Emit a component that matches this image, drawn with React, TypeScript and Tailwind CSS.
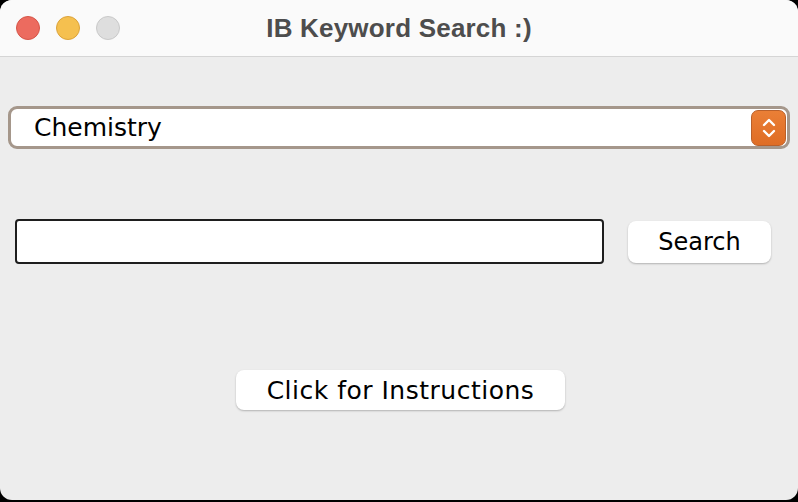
import React from "react";

export default function App() {
  return (
    <div className="w-[798px] h-[502px] bg-black">
      <div className="w-[798px] h-[500px] rounded-[12px] overflow-hidden flex flex-col bg-[#ededed]">
        <div className="relative h-[57px] shrink-0 bg-[#fafafa] border-b border-[#d5d5d5] flex items-center justify-center">
          <div className="absolute left-[16px] top-[16px] flex gap-[16px]">
            <div className="w-[24px] h-[24px] rounded-full bg-[#ec6b5f] border border-[#d65548]" />
            <div className="w-[24px] h-[24px] rounded-full bg-[#f5c04f] border border-[#dca33a]" />
            <div className="w-[24px] h-[24px] rounded-full bg-[#dedede] border border-[#c9c9c9]" />
          </div>
          <div className="text-[26px] font-bold text-[#4d4d4d] tracking-[0.2px] leading-none" style={{ fontFamily: '"Liberation Sans", Arial, sans-serif' }}>
            IB Keyword Search :)
          </div>
        </div>
        <div className="flex flex-col" style={{ fontFamily: '"DejaVu Sans", sans-serif' }}>
          <div className="mt-[49px] mx-[8px] h-[43px] rounded-[9px] border-[3px] border-[#a5978b] bg-white flex items-center justify-between pl-[23px] pr-[1px]">
            <span className="text-[25px] text-black leading-none">Chemistry</span>
            <div className="w-[35px] h-[36px] rounded-[7px] bg-gradient-to-b from-[#ea7f36] to-[#df6d25] border border-[#b9602a] flex items-center justify-center">
              <svg width="16" height="24" viewBox="0 0 16 24" fill="none" stroke="white" strokeWidth="2.4" strokeLinecap="round" strokeLinejoin="round">
                <path d="M3 9 L8 4 L13 9" />
                <path d="M3 15 L8 20 L13 15" />
              </svg>
            </div>
          </div>
          <div className="mt-[70px] pl-[15px] flex items-center gap-[24px]">
            <div className="w-[589px] h-[45px] bg-white border-2 border-[#1e1e1e] rounded-[4px]" />
            <div className="w-[143px] h-[42px] bg-white rounded-[8px] shadow-[0_1px_2px_rgba(0,0,0,0.25)] flex items-center justify-center text-[24px] text-black leading-none">
              Search
            </div>
          </div>
          <div className="mt-[106px] flex justify-center">
            <div className="ml-[3px] w-[329px] h-[40px] bg-white rounded-[8px] shadow-[0_1px_2px_rgba(0,0,0,0.25)] flex items-center justify-center text-[25px] tracking-[0.5px] text-black leading-none">
              Click for Instructions
            </div>
          </div>
        </div>
      </div>
    </div>
  );
}
